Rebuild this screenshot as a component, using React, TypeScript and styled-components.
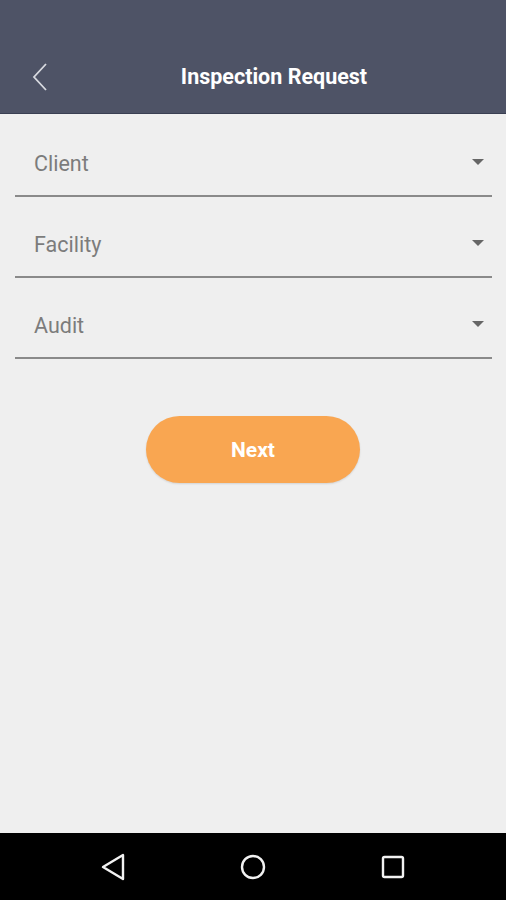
import React from "react";
import styled, { createGlobalStyle } from "styled-components";

const Global = createGlobalStyle`
  html, body { margin: 0; padding: 0; }
  body { background: #efefef; font-family: Roboto, "Liberation Sans", sans-serif; }
`;

const Screen = styled.div`
  width: 506px;
  height: 900px;
  display: flex;
  flex-direction: column;
  background: #efefef;
  overflow: hidden;
`;

const Header = styled.header`
  height: 114px;
  background: #4e5366;
  border-bottom: 1px solid #3a3f52;
  display: flex;
  align-items: flex-end;
  box-sizing: border-box;
  padding-bottom: 21px;
`;

const BackButton = styled.div`
  width: 80px;
  height: 30px;
  display: flex;
  align-items: center;
  padding-left: 32px;
  box-sizing: border-box;
`;

const Title = styled.h1`
  margin: 0;
  flex: 1;
  text-align: center;
  color: #ffffff;
  font-family: Roboto, "Liberation Sans", sans-serif;
  font-weight: 700;
  font-size: 21.5px;
  line-height: 30px;
`;

const Spacer = styled.div`
  width: 38px;
`;

const Form = styled.main`
  flex: 1;
  display: flex;
  flex-direction: column;
  padding: 2px 14px 0 15px;
`;

const Field = styled.div`
  height: 81px;
  display: flex;
  border-bottom: 2px solid #8a8a8a;
  box-sizing: border-box;
  padding-top: 17px;
`;

const FieldInner = styled.div`
  flex: 1;
  display: flex;
  align-items: center;
  justify-content: space-between;
  padding: 0 8px 0 19px;
`;

const Label = styled.span`
  font-family: Roboto, "Liberation Sans", sans-serif;
  font-size: 21.5px;
  color: #7c7c7c;
  line-height: 26px;
`;

const Caret = styled.span`
  width: 0;
  height: 0;
  margin-top: -4px;
  border-left: 6px solid transparent;
  border-right: 6px solid transparent;
  border-top: 6px solid #666666;
`;

const ButtonRow = styled.div`
  display: flex;
  justify-content: center;
  padding-top: 57px;
  padding-right: 1px;
`;

const NextButton = styled.button`
  width: 214px;
  height: 67px;
  border: none;
  border-radius: 34px;
  background: #f9a651;
  color: #ffffff;
  font-family: Roboto, "Liberation Sans", sans-serif;
  font-weight: 700;
  font-size: 21px;
  box-shadow: 0 1px 2px rgba(0, 0, 0, 0.12);
`;

const NavBar = styled.nav`
  height: 67px;
  background: #000000;
  display: flex;
  align-items: center;
  justify-content: center;
`;

const NavSlot = styled.div`
  width: 140px;
  display: flex;
  justify-content: center;
  align-items: center;
`;

const fields = ["Client", "Facility", "Audit"];

export default function App() {
  return (
    <>
      <Global />
      <Screen>
        <Header>
          <BackButton>
            <svg width="16" height="28" viewBox="0 0 16 28">
              <polyline points="14,1 2,14 14,27" fill="none" stroke="#d8dae0" strokeWidth="1.8" />
            </svg>
          </BackButton>
          <Title>Inspection Request</Title>
          <Spacer />
        </Header>
        <Form>
          {fields.map((f) => (
            <Field key={f}>
              <FieldInner>
                <Label>{f}</Label>
                <Caret />
              </FieldInner>
            </Field>
          ))}
          <ButtonRow>
            <NextButton>Next</NextButton>
          </ButtonRow>
        </Form>
        <NavBar>
          <NavSlot>
            <svg width="26" height="28" viewBox="0 0 26 28">
              <polygon points="23,2 23,26 3,14" fill="none" stroke="#f2f2f2" strokeWidth="2.4" strokeLinejoin="round" />
            </svg>
          </NavSlot>
          <NavSlot>
            <svg width="28" height="28" viewBox="0 0 28 28">
              <circle cx="14" cy="14" r="11" fill="none" stroke="#f2f2f2" strokeWidth="2.4" />
            </svg>
          </NavSlot>
          <NavSlot>
            <svg width="26" height="26" viewBox="0 0 26 26">
              <rect x="3" y="3" width="20" height="20" rx="1.5" fill="none" stroke="#f2f2f2" strokeWidth="2.4" />
            </svg>
          </NavSlot>
        </NavBar>
      </Screen>
    </>
  );
}
